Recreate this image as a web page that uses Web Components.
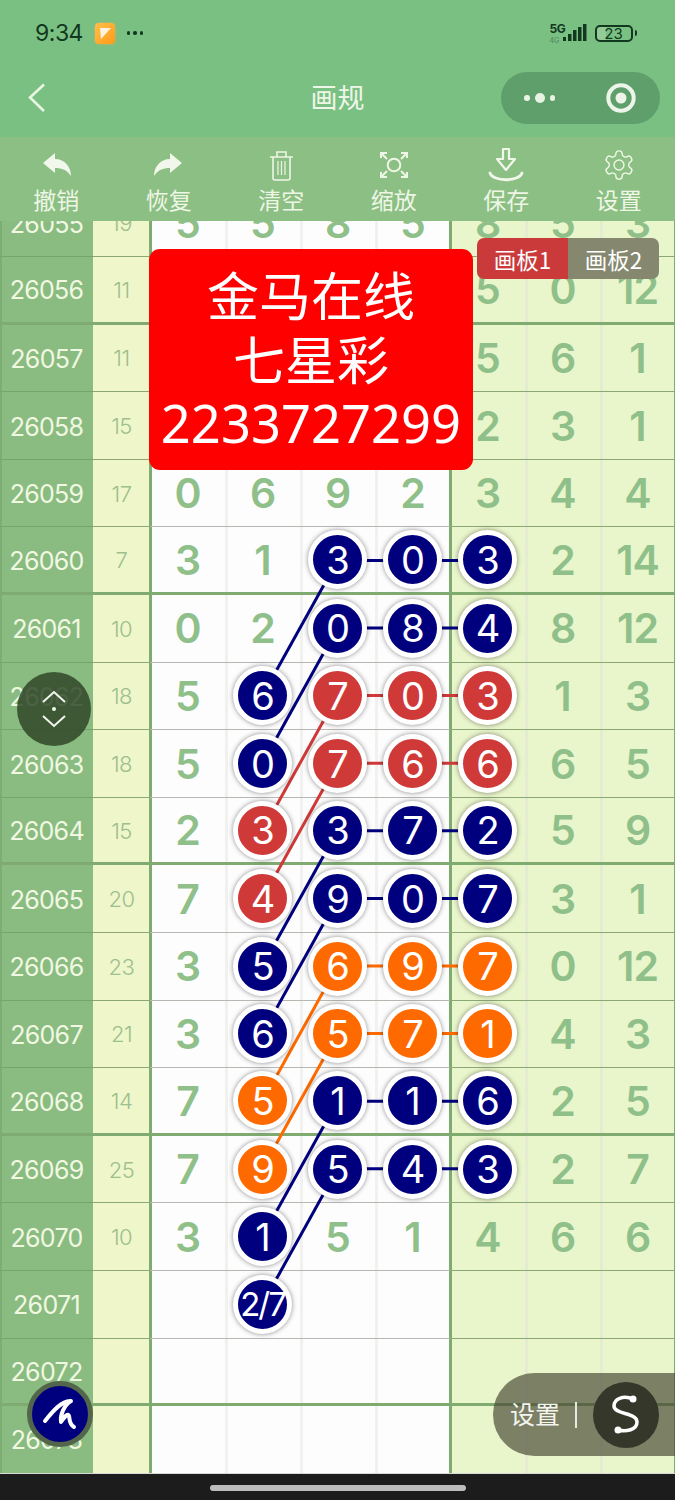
<!DOCTYPE html>
<html lang="zh">
<head>
<meta charset="utf-8">
<title>画规</title>
<style>
html,body{margin:0;padding:0;background:#1c1c1c}
body{width:675px;height:1500px;overflow:hidden;font-family:"Noto Sans CJK SC","Noto Sans",sans-serif}
</style>
</head>
<body>
<app-screen></app-screen>
<script>
const CJK='"Noto Sans CJK SC","Noto Sans",sans-serif';
const NUM='Inter,"Noto Sans",sans-serif';
function def(name,css,html,init){
  customElements.define(name,class extends HTMLElement{
    connectedCallback(){
      if(this.shadowRoot)return;
      const r=this.attachShadow({mode:'open'});
      const h=typeof html==='function'?html(this):html;
      r.innerHTML=`<style>${css}</style>${h}`;
    }
  });
}

def('status-bar',`
:host{display:flex;align-items:center;justify-content:space-between;height:66px;padding:0 38px 0 35px;box-sizing:border-box;color:#12381f;font-family:${NUM}}
.l,.r{display:flex;align-items:center}
.t{font-size:23px;font-weight:400;letter-spacing:-.5px}
.app{width:20px;height:21px;border-radius:4px;margin-left:12px;background:linear-gradient(135deg,#ffc04d,#ff9a17);box-shadow:0 0 2px #f5b04a}
.app svg{display:block}
.dots{margin-left:12px;display:flex;gap:3px}
.dots i{width:3.5px;height:3.5px;border-radius:50%;background:#12381f}
.net{display:flex;flex-direction:column;width:16px;margin-right:-4px}
.net b{font-size:12px;line-height:12px;font-weight:700;letter-spacing:-.4px}
.net span{font-size:7px;line-height:7px;opacity:.45;margin-top:2px}
.bat{display:flex;align-items:center;margin-left:7px}
.cell{width:38px;height:17px;box-sizing:border-box;border:2px solid #12381f;border-radius:5px;display:flex;align-items:center;justify-content:center;font-size:15px;line-height:1;background:linear-gradient(90deg,rgba(255,255,255,.18) 25%,transparent 25%)}
.nub{width:2.5px;height:6px;background:#12381f;border-radius:0 2px 2px 0;margin-left:2px}
`,`<div class="l"><span class="t">9:34</span>
<div class="app"><svg width="20" height="21" viewBox="0 0 20 21"><path d="M5 5H16L6 16Z" fill="#fff3df"/></svg></div>
<div class="dots"><i></i><i></i><i></i></div></div>
<div class="r"><div class="net"><b>5G</b><span>4G</span></div>
<svg width="26" height="18" viewBox="0 0 26 18" fill="#12381f"><rect x="1" y="13" width="3" height="4"/><rect x="6" y="10" width="3.500" height="7"/><rect x="11" y="6" width="3.500" height="11"/><rect x="16" y="3" width="3.500" height="14"/><rect x="21" y="0" width="3.500" height="17"/></svg>
<div class="bat"><div class="cell">23</div><div class="nub"></div></div></div>`);

def('nav-bar',`
:host{display:grid;grid-template-columns:1fr auto 1fr;align-items:center;height:71px;padding:0 15px 7px 27px;box-sizing:border-box;color:#eef6e8;font-family:${CJK}}
.title{font-size:27px;line-height:1;transform:translate(-6px,-2px)}
.cap{justify-self:end;width:159px;height:52px;border-radius:26px;background:#5f9f6c;display:flex;align-items:center;justify-content:space-between;padding:0 24px 0 23px;box-sizing:border-box}
.d{display:flex;align-items:center;gap:5px}
.d i{display:block;border-radius:50%;background:#e9f3e4;width:5.500px;height:5.500px}
.d i.m{width:10px;height:10px}
svg{display:block}
`,`<svg width="20" height="30" viewBox="0 0 20 30"><path d="M17 1.500 3 14.500 17 28" fill="none" stroke="#e9f6e2" stroke-width="2.600"/></svg>
<div class="title">画规</div>
<div class="cap"><div class="d"><i></i><i class="m"></i><i></i></div>
<svg width="30" height="30" viewBox="0 0 30 30"><circle cx="15" cy="15" r="12.700" fill="none" stroke="#edf5e8" stroke-width="4"/><circle cx="15" cy="15" r="5.500" fill="#edf5e8"/></svg></div>`);

def('tool-item',`
:host{flex:1;display:flex;flex-direction:column;align-items:center;color:#eef6e6;font-family:${CJK}}
.ic{height:36px;display:flex;align-items:center;justify-content:center}
.lb{font-size:23px;line-height:30px;margin-top:1px}
`,e=>`<div class="ic"><slot></slot></div><div class="lb">${e.getAttribute('label')}</div>`);

def('tool-bar',`
:host{display:flex;height:84px;padding-top:10px;box-sizing:border-box;background:#8cbf83}
`,`<slot></slot>`);

def('lot-ball',`
:host{display:flex;position:relative;z-index:3;width:59px;height:59px;box-sizing:border-box;border:5px solid #fff;border-radius:50%;align-items:center;justify-content:center;color:#fff;font-family:${NUM};font-size:38px;font-weight:400;line-height:1;background:var(--c);box-shadow:0 0 5px rgba(0,0,0,.45);flex:none}
:host([c=n]){--c:#00007f}
:host([c=r]){--c:#cf3a39}
:host([c=o]){--c:#ff6a00}
:host([small]){font-size:33px;letter-spacing:-2px}
`,`<slot></slot>`);

def('lot-row',`
:host{display:grid;grid-template-columns:93px 57px repeat(6,75px) 75px;height:67.6px;font-family:${NUM}}
.c{display:flex;align-items:center;justify-content:center;box-sizing:border-box;border-bottom:1px solid var(--ln);height:67.6px}
:host([thick]) .c{border-bottom:3px solid #7fab71}
.p{--ln:#76a56b;background:#8abc81;color:#f1f8e2;font-size:25px;letter-spacing:-.7px;box-shadow:inset 2px 0 #7cae74;padding-top:2px}
.s{--ln:#8aa774;background:#eff6ca;color:#9dbf8e;font-size:22px;font-weight:300;letter-spacing:-.5px;box-shadow:inset -1px 0 #7fab71;padding-top:1px}
.w{--ln:#b4b8b0;background:#fdfdfd;box-shadow:inset 3px 0 #f1f2ef}
.y{--ln:#8aa774;background:#e9f5cb;box-shadow:inset 3px 0 #e6ecd3}
.d{color:#8fc08a;font-size:41px;font-weight:600;letter-spacing:-1px}
.c1{box-shadow:inset 2px 0 #7fab71}
.c4{box-shadow:inset 3px 0 #f1f2ef,inset -1px 0 #7fab71}
.c5{box-shadow:inset 2px 0 #7fab71}
.c7{box-shadow:inset 3px 0 #e6ecd3,inset -1px 0 #7fab71}
`,e=>{
  const vals=(e.getAttribute('cells')||',,,,,,').split(',');
  let h=`<div class="c p">${e.getAttribute('period')}</div><div class="c s">${e.getAttribute('sum')||''}</div>`;
  vals.forEach((v,i)=>{
    const zone=i<4?'w':'y';
    let inner='';
    if(v){
      if(/^[nro]/.test(v)){
        const t=v.slice(1);
        inner=`<lot-ball c="${v[0]}"${t.length>2?' small':''}>${t}</lot-ball>`;
      }else inner=v;
    }
    h+=`<div class="c d ${zone} c${i+1}">${inner}</div>`;
  });
  return h;
});

const ROWS=[
['26055','19','5,5,8,5,8,5,3'],
['26056','11',',,,,5,0,12',1],
['26057','11',',,,,5,6,1'],
['26058','15',',,,,2,3,1'],
['26059','17','0,6,9,2,3,4,4'],
['26060','7','3,1,n3,n0,n3,2,14',1],
['26061','10','0,2,n0,n8,n4,8,12'],
['26062','18','5,n6,r7,r0,r3,1,3'],
['26063','18','5,n0,r7,r6,r6,6,5'],
['26064','15','2,r3,n3,n7,n2,5,9',1],
['26065','20','7,r4,n9,n0,n7,3,1'],
['26066','23','3,n5,o6,o9,o7,0,12'],
['26067','21','3,n6,o5,o7,o1,4,3'],
['26068','14','7,o5,n1,n1,n6,2,5',1],
['26069','25','7,o9,n5,n4,n3,2,7'],
['26070','10','3,n1,5,1,4,6,6'],
['26071','',',n2/7,,,,,'],
['26072','',',,,,,,',1],
['26073','',',,,,,,']
];
const NAVY='#00007f',RED='#cf3a39',ORG='#ff6a00';
const Y=i=>290+(i-1)*67.6;
function seg(x1,i1,x2,i2,c){return `<line x1="${x1}" y1="${Y(i1)}" x2="${x2}" y2="${Y(i2)}" stroke="${c}" stroke-width="3"/>`}
let lines='';
[[5,NAVY],[6,NAVY],[7,RED],[8,RED],[9,NAVY],[10,NAVY],[11,ORG],[12,ORG],[13,NAVY],[14,NAVY]].forEach(([i,c])=>{
  lines+=seg(337.5,i,262.5,i+2,c);
  lines+=seg(337.5,i,487.5,i,c);
});

def('notice-card',`
:host{position:absolute;left:149px;top:28px;width:324px;height:221px;box-sizing:border-box;background:#fe0000;border-radius:11px;z-index:5;display:flex;flex-direction:column;align-items:center;justify-content:center;color:#fff;font-family:${CJK};font-size:52px;line-height:63.5px;white-space:nowrap}
div{height:63.5px}
.a{transform:translateY(-2px)}
.n{font-family:"Noto Sans",sans-serif;font-size:52.5px}
`,`<div class="a">金马在线</div><div class="a">七星彩</div><div class="n">2233727299</div>`);

def('board-tabs',`
:host{position:absolute;left:477px;top:17px;display:flex;z-index:5;height:41px;border-radius:7px;overflow:hidden;font-family:${CJK};font-size:22.5px;color:#fff}
div{width:91px;display:flex;align-items:center;justify-content:center;padding-top:1px;box-sizing:border-box}
.a{background:#cb3a3b}
.b{background:#85886f}
`,`<div class="a">画板1</div><div class="b">画板2</div>`);

def('lot-table',`
:host{display:block;position:relative;height:1252px;overflow:hidden;background:#fdfdfd}
.rows{margin-top:-31.5px;display:flex;flex-direction:column}
svg{position:absolute;left:0;top:0;z-index:2;pointer-events:none}
`,()=>`<div class="rows">${ROWS.map(r=>`<lot-row period="${r[0]}" sum="${r[1]}" cells="${r[2]}"${r[3]?' thick':''}></lot-row>`).join('')}</div>
<svg width="675" height="1252" viewBox="0 221 675 1252">${lines}</svg>
<notice-card></notice-card><board-tabs></board-tabs>`);

def('home-bar',`
:host{display:flex;align-items:center;justify-content:center;height:27px;box-sizing:border-box;background:#1c1c1c;border-top:1px solid #d8d8d8}
i{display:block;width:256px;height:6px;border-radius:3px;background:#bcbcbc;margin-top:1px}
`,`<i></i>`);

def('scroll-fab',`
:host{position:absolute;left:17px;top:672px;width:74px;height:74px;border-radius:50%;background:rgba(48,70,40,.85);z-index:8;display:flex;align-items:center;justify-content:center}
svg{display:block}
`,`<svg width="40" height="46" viewBox="0 0 40 46" fill="none" stroke="#f3f6ef" stroke-width="2"><path d="M9 16 20 6 31 16"/><circle cx="20" cy="23" r="2" fill="#f3f6ef" stroke="none"/><path d="M9 30 20 40 31 30"/></svg>`);

def('pen-fab',`
:host{position:absolute;left:27px;top:1381px;width:66px;height:66px;box-sizing:border-box;border:5px solid #53654b;border-radius:50%;background:#00007f;z-index:8;display:flex;align-items:center;justify-content:center}
svg{display:block}
`,`<svg width="56" height="56" viewBox="5 5 56 56" fill="none" stroke="#fff" stroke-width="4" stroke-linecap="round" stroke-linejoin="round"><path d="M18 40C25 31 35 19 44 20 37 24 33 34 34 41 38 35 41 32 42 35 43 39 42 43 47 46"/></svg>`);

def('settings-pill',`
:host{position:absolute;right:0;top:1373px;width:182px;height:83px;box-sizing:border-box;border-radius:41.5px 0 0 41.5px;background:rgba(70,70,50,.67);z-index:8;display:flex;align-items:center;padding-left:17px;color:#f4f5ef;font-family:${CJK};font-size:25px}
.t{width:65px;transform:translateY(-2px)}
.s{width:2px;height:26px;background:#f4f5ef;opacity:.9}
.o{width:66px;height:66px;margin-left:16px;border-radius:50%;background:#35372a;flex:none}
svg{display:block}
`,`<span class="t">设置</span><span class="s"></span><div class="o"><svg width="66" height="66" viewBox="0 0 66 66" fill="none" stroke="#fff" stroke-width="3.500"><path d="M40 17C30 13 21 17 21 24 21 33 44 30 44 40 44 48 33 50 25 48"/><circle cx="40" cy="17" r="3.500" fill="#fff" stroke="none"/><circle cx="25" cy="48" r="3.500" fill="#fff" stroke="none"/></svg></div>`);

def('app-screen',`
:host{display:block;position:relative;width:675px;height:1500px;overflow:hidden;background:#7bc083}
svg{display:block}
`,`<status-bar></status-bar><nav-bar></nav-bar>
<tool-bar>
<tool-item label="撤销"><svg width="32" height="36" viewBox="0 0 32 36"><path d="M3 16 15 6V12C25 12 31 20 31 29 27 23 22 21 15 21V26Z" fill="#f1f7ea"/></svg></tool-item>
<tool-item label="恢复"><svg width="32" height="36" viewBox="0 0 32 36"><path d="M29 16 17 6V12C7 12 1 20 1 29 5 23 10 21 17 21V26Z" fill="#f1f7ea"/></svg></tool-item>
<tool-item label="清空"><svg width="32" height="36" viewBox="0 0 32 36" fill="none" stroke="#eef6e6" stroke-width="1.600"><path d="M5 10H28M12 10V5H21V10"/><path d="M8 10V31C8 32 9 33 10 33H23C24 33 25 32 25 31V10"/><path d="M13 14V28M16.500 14V28M20 14V28" stroke-width="1.200"/></svg></tool-item>
<tool-item label="缩放"><svg width="32" height="36" viewBox="0 0 32 36" fill="none" stroke="#eef6e6" stroke-width="2"><circle cx="16" cy="18" r="6.300"/><path d="M3 11V6H9M3 6 9 12"/><path d="M29 11V6H23M29 6 23 12"/><path d="M3 25V30H9M3 30 9 24"/><path d="M29 25V30H23M29 30 23 24"/></svg></tool-item>
<tool-item label="保存"><svg width="40" height="36" viewBox="0 0 40 36" fill="none" stroke="#f1f7ea" stroke-width="2.200"><path d="M17 2H23V12H29L20 23 11 12H17Z" stroke-linejoin="round"/><path d="M4 26C7 35 33 35 36 26" stroke-width="2.800" stroke-linecap="round"/></svg></tool-item>
<tool-item label="设置"><svg width="34" height="34" viewBox="0 0 24 24" fill="none" stroke="#eef6e6" stroke-width="1"><path d="M12.220 2h-.44a2 2 0 0 0-2 2v.18a2 2 0 0 1-1 1.730l-.43.25a2 2 0 0 1-2 0l-.15-.08a2 2 0 0 0-2.730.73l-.22.38a2 2 0 0 0 .73 2.730l.15.1a2 2 0 0 1 1 1.720v.51a2 2 0 0 1-1 1.740l-.15.09a2 2 0 0 0-.73 2.730l.22.38a2 2 0 0 0 2.730.73l.15-.08a2 2 0 0 1 2 0l.43.25a2 2 0 0 1 1 1.730V20a2 2 0 0 0 2 2h.44a2 2 0 0 0 2-2v-.18a2 2 0 0 1 1-1.730l.43-.25a2 2 0 0 1 2 0l.15.08a2 2 0 0 0 2.730-.73l.22-.39a2 2 0 0 0-.73-2.730l-.15-.08a2 2 0 0 1-1-1.740v-.5a2 2 0 0 1 1-1.740l.15-.09a2 2 0 0 0 .73-2.730l-.22-.38a2 2 0 0 0-2.730-.73l-.15.08a2 2 0 0 1-2 0l-.43-.25a2 2 0 0 1-1-1.730V4a2 2 0 0 0-2-2z"/><circle cx="12" cy="12" r="3.500"/></svg></tool-item>
</tool-bar>
<lot-table></lot-table>
<home-bar></home-bar>
<scroll-fab></scroll-fab><pen-fab></pen-fab><settings-pill></settings-pill>`);
</script>
</body>
</html>
